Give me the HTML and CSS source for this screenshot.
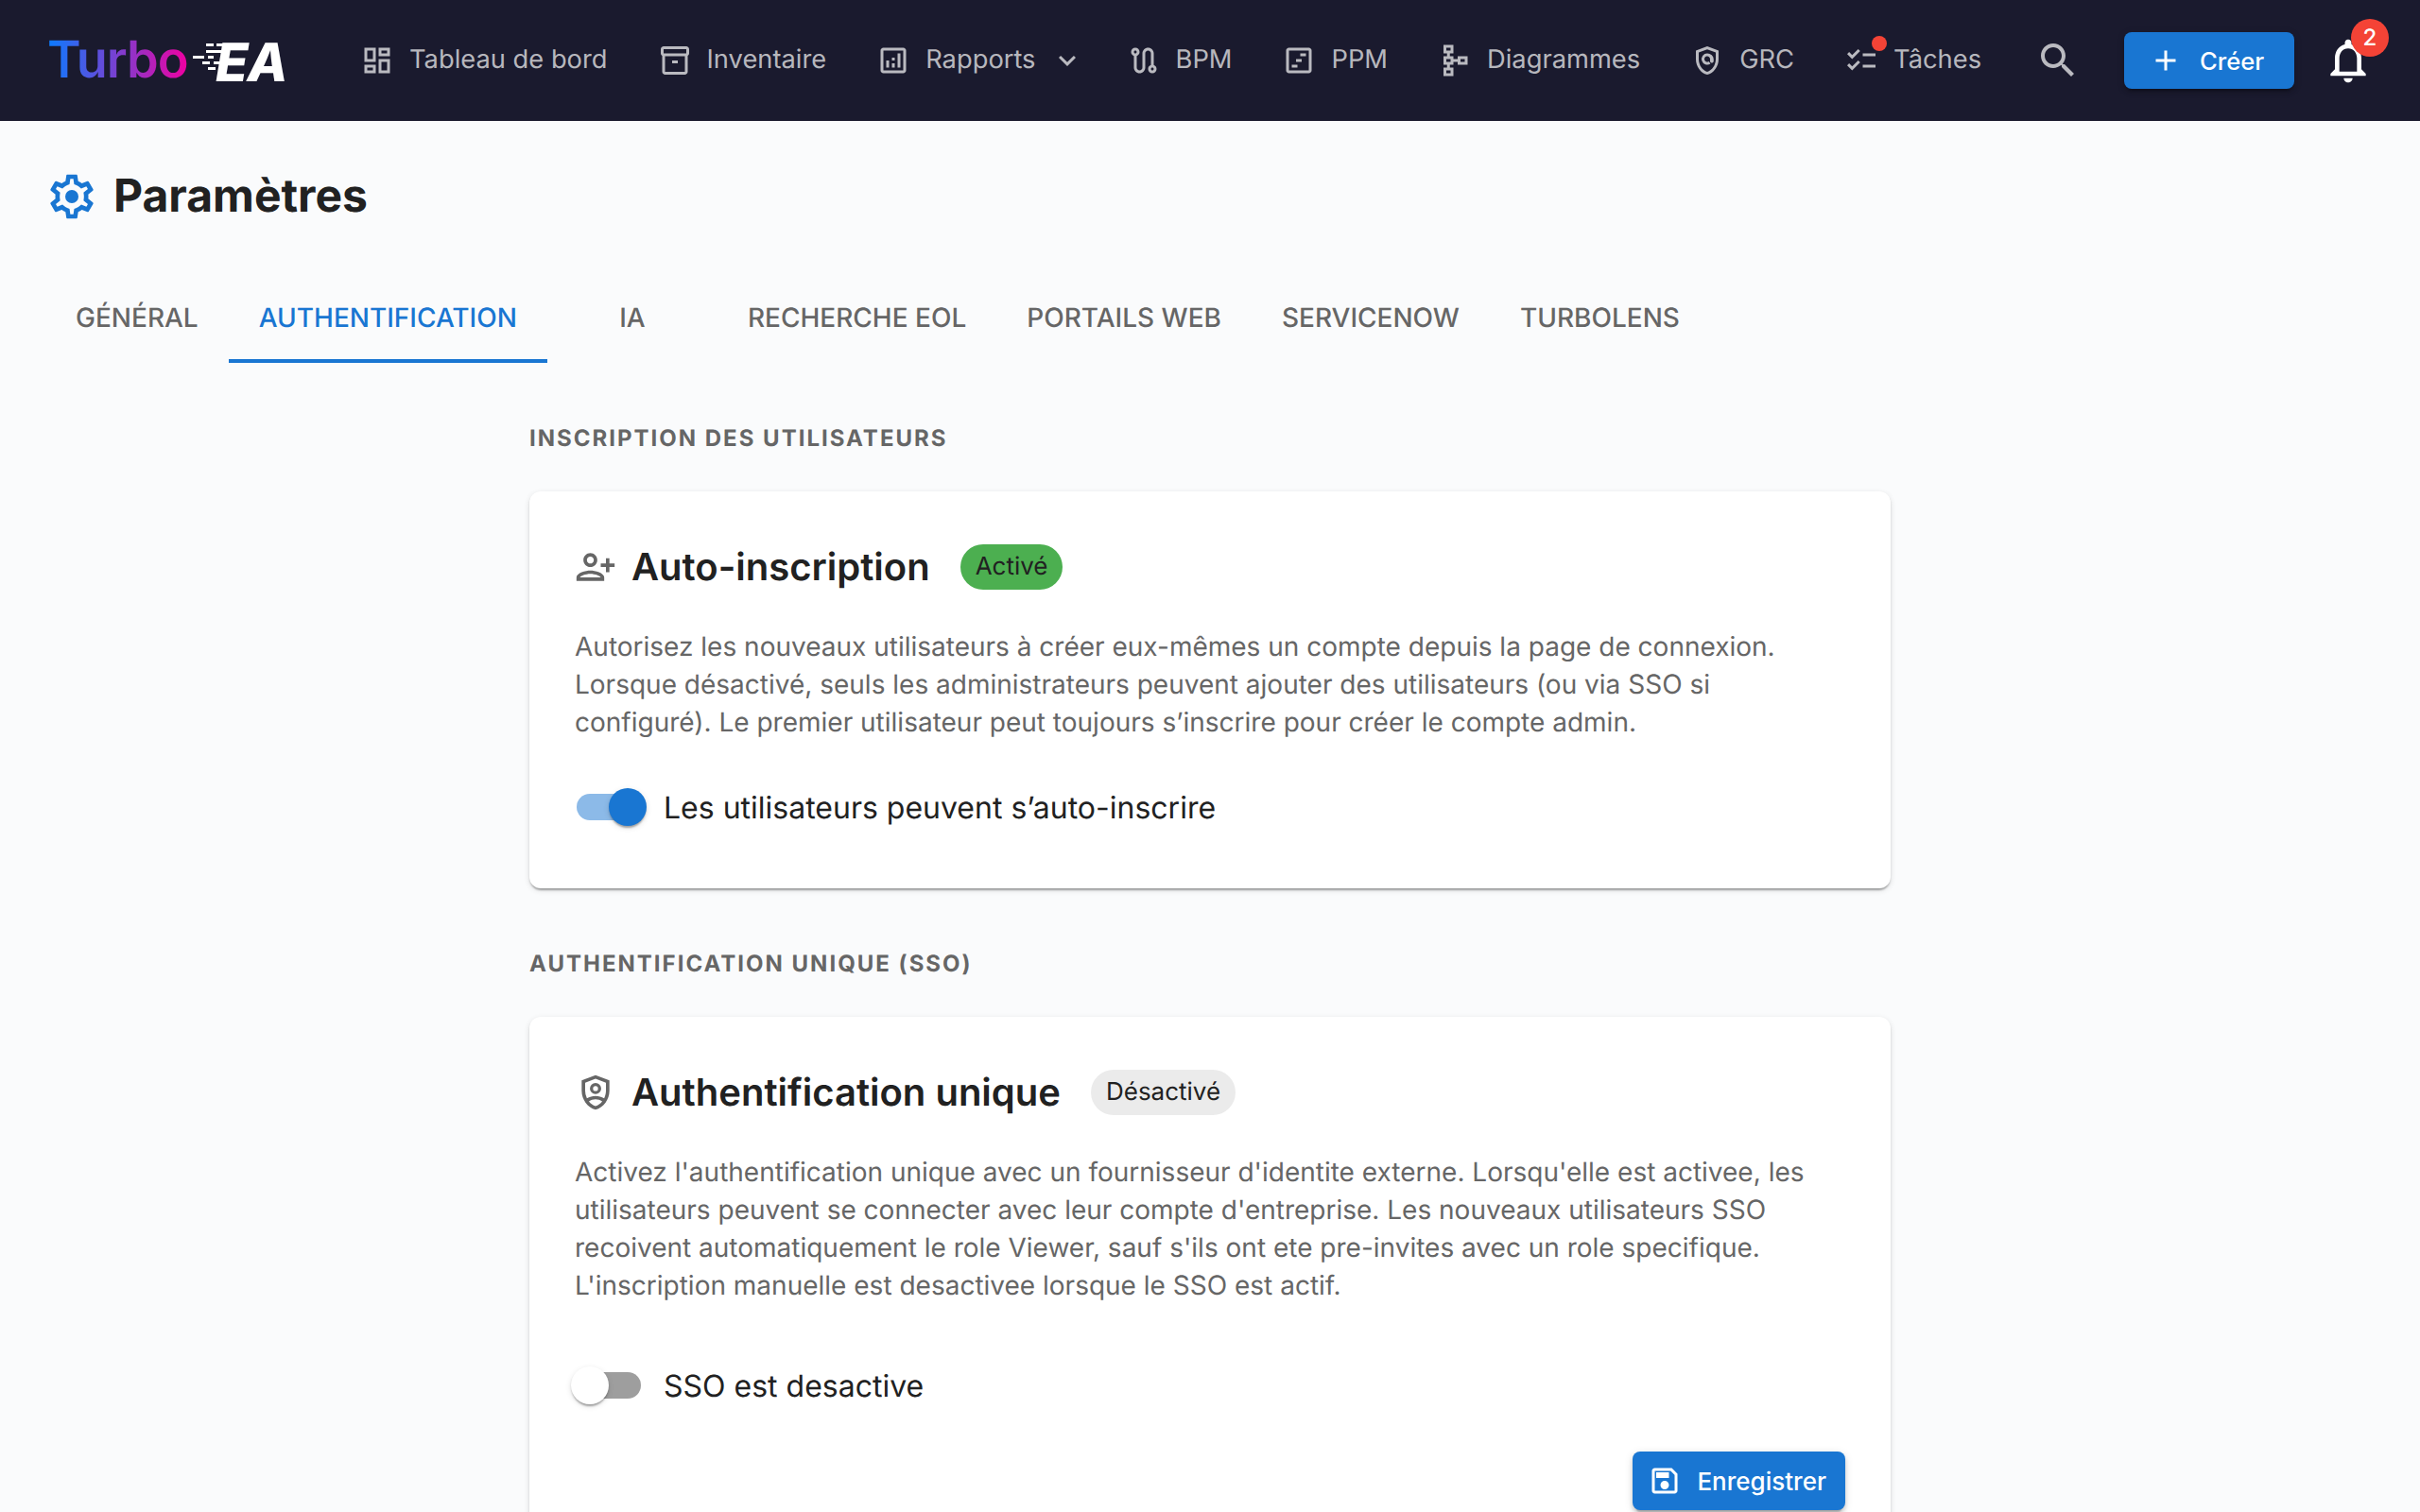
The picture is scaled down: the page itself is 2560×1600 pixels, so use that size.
FILE: index.html
```html
<!DOCTYPE html>
<html lang="fr">
<head>
  <meta charset="UTF-8" />
  <meta name="viewport" content="width=device-width, initial-scale=1.0"/>
  <title>Paramètres - Turbo EA</title>
  <link rel="stylesheet" href="styles.css">
</head>
<body>

  <header class="topbar">
    <a class="logo" href="#">
      <span class="logo-turbo">Turbo</span>
      <span class="logo-ea">EA</span>
      <svg class="logo-lines" viewBox="0 0 60 44">
        <rect x="14" y="2" width="8" height="3" fill="#fff"/>
        <rect x="25" y="2" width="14" height="3" fill="#fff"/>
        <rect x="14" y="9" width="20" height="3" fill="#fff"/>
        <rect x="0" y="15" width="12" height="3" fill="#fff"/>
        <rect x="16" y="15" width="6" height="3" fill="#fff"/>
        <rect x="10" y="21" width="8" height="3" fill="#fff"/>
        <rect x="22" y="21" width="14" height="3" fill="#fff"/>
        <rect x="16" y="27" width="8" height="3" fill="#fff"/>
      </svg>
    </a>

    <nav class="nav-links">
      <a class="nav-item" href="#">
        <svg class="nav-icon" viewBox="0 0 24 24"><path d="M19 5v2h-4V5zM9 5v6H5V5zm10 8v6h-4v-6zM9 17v2H5v-2zM21 3h-8v6h8zM11 3H3v10h8zm10 8h-8v10h8zm-10 4H3v6h8z"/></svg>
        Tableau de bord
      </a>
      <a class="nav-item" href="#">
        <svg class="nav-icon" viewBox="0 0 24 24"><path d="M20 2H4c-1 0-2 .9-2 2v3.01c0 .72.43 1.34 1 1.69V20c0 1.1 1.1 2 2 2h14c.9 0 2-.9 2-2V8.7c.57-.35 1-.97 1-1.69V4c0-1.1-1-2-2-2m-1 18H5V9h14zm1-13H4V4h16z"/><path d="M10 12h4v2h-4z"/></svg>
        Inventaire
      </a>
      <a class="nav-item nav-item-menu" href="#">
        <svg class="nav-icon" viewBox="0 0 24 24"><path d="M19 3H5c-1.1 0-2 .9-2 2v14c0 1.1.9 2 2 2h14c1.100 0 2-.9 2-2V5c0-1.100-.9-2-2-2m0 16H5V5h14z"/><path d="M7 12h2v5H7zm8-5h2v10h-2zm-4 7h2v3h-2zm0-4h2v2h-2z"/></svg>
        Rapports
        <svg class="nav-chevron" viewBox="0 0 24 24"><path d="M16.590 8.590 12 13.170 7.410 8.590 6 10l6 6 6-6z"/></svg>
      </a>
      <a class="nav-item" href="#">
        <svg class="nav-icon" viewBox="0 0 24 24"><path d="M19 15.180V7c0-2.210-1.790-4-4-4s-4 1.790-4 4v10c0 1.100-.9 2-2 2s-2-.9-2-2V8.820C8.160 8.400 9 7.300 9 6c0-1.660-1.340-3-3-3S3 4.340 3 6c0 1.300.84 2.400 2 2.820V17c0 2.210 1.790 4 4 4s4-1.790 4-4V7c0-1.100.9-2 2-2s2 .9 2 2v8.180c-1.160.41-2 1.510-2 2.820 0 1.660 1.340 3 3 3s3-1.340 3-3c0-1.300-.84-2.400-2-2.820M6 5c.55 0 1 .45 1 1s-.45 1-1 1-1-.45-1-1 .45-1 1-1m12 14c-.55 0-1-.45-1-1s.45-1 1-1 1 .45 1 1-.45 1-1 1"/></svg>
        BPM
      </a>
      <a class="nav-item" href="#">
        <svg class="nav-icon" viewBox="0 0 24 24"><path d="M19 3H5c-1.100 0-2 .9-2 2v14c0 1.100.9 2 2 2h14c1.100 0 2-.9 2-2V5c0-1.100-.9-2-2-2m0 16H5V5h14z"/><path d="M13 7h4v2h-4zM10 11h4v2h-4zM7 15h4v2H7z"/></svg>
        PPM
      </a>
      <a class="nav-item" href="#">
        <svg class="nav-icon" viewBox="0 0 24 24"><path d="M14 9v2h-3V9H8.500V7H11V1H4v6h2.500v2H4v6h2.500v2H4v6h7v-6H8.500v-2H11v-2h3v2h7V9zM6 3h3v2H6zm3 18H6v-2h3zm0-8H6v-2h3zm10 0h-3v-2h3z"/></svg>
        Diagrammes
      </a>
      <a class="nav-item" href="#">
        <svg class="nav-icon" viewBox="0 0 24 24"><path d="M12 2 4 5v6.100c0 5.050 3.410 9.760 8 10.900 4.590-1.140 8-5.850 8-10.900V5zm6 9.100c0 4-2.550 7.700-6 8.830-3.450-1.130-6-4.820-6-8.830V6.390l6-2.250 6 2.250z"/><path d="M12 7a4 4 0 1 0 2.300 7.270l-1.150-1.640A2 2 0 1 1 14 11v1.500c0 1.600 2.500 1.600 2.500 0V11A4.500 4 0 0 0 12 7"/></svg>
        GRC
      </a>
      <a class="nav-item" href="#">
        <span class="nav-icon-wrap">
          <svg class="nav-icon" viewBox="0 0 24 24"><path d="M22 7h-9v2h9zm0 8h-9v2h9zM5.540 11 2 7.460l1.410-1.410 2.120 2.120 4.240-4.240 1.410 1.410zm0 8L2 15.460l1.410-1.410 2.120 2.120 4.240-4.240 1.410 1.410z"/></svg>
          <span class="nav-dot"></span>
        </span>
        Tâches
      </a>
    </nav>

    <div class="topbar-right">
      <svg class="search-icon" viewBox="0 0 24 24"><path d="M15.500 14h-.79l-.28-.27C15.410 12.590 16 11.110 16 9.500 16 5.910 13.090 3 9.500 3S3 5.910 3 9.500 5.910 16 9.500 16c1.610 0 3.090-.59 4.230-1.570l.27.28v.79l5 4.990L20.490 19zm-6 0C7.010 14 5 11.990 5 9.500S7.010 5 9.500 5 14 7.010 14 9.500 11.990 14 9.500 14"/></svg>
      <button class="btn btn-create">
        <svg class="btn-icon" viewBox="0 0 24 24"><path d="M19 13h-6v6h-2v-6H5v-2h6V5h2v6h6z"/></svg>
        Créer
      </button>
      <div class="bell">
        <svg class="bell-icon" viewBox="0 0 24 24"><path d="M12 22c1.100 0 2-.9 2-2h-4c0 1.100.9 2 2 2m6-6v-5c0-3.070-1.630-5.640-4.500-6.320V4c0-.83-.67-1.500-1.500-1.500s-1.500.67-1.500 1.500v.68C7.640 5.360 6 7.920 6 11v5l-2 2v1h16v-1zm-2 1H8v-6c0-2.480 1.510-4.500 4-4.500s4 2.020 4 4.500z"/></svg>
        <span class="bell-badge">2</span>
      </div>
    </div>
  </header>

  <main class="page">
    <div class="page-title">
      <svg class="title-icon" viewBox="0 0 24 24"><path d="M19.430 12.980c.04-.32.07-.64.07-.98 0-.34-.03-.66-.07-.98l2.110-1.650c.19-.15.24-.42.12-.64l-2-3.460c-.09-.16-.26-.25-.44-.25-.06 0-.12.01-.17.03l-2.490 1c-.52-.4-1.080-.73-1.690-.98l-.38-2.650C14.460 2.180 14.250 2 14 2h-4c-.25 0-.46.18-.49.42l-.38 2.650c-.61.25-1.170.59-1.690.98l-2.490-1c-.06-.02-.12-.03-.18-.03-.17 0-.34.09-.43.25l-2 3.460c-.13.22-.07.49.12.64l2.110 1.650c-.04.32-.07.65-.07.98 0 .33.03.66.07.98l-2.110 1.650c-.19.15-.24.42-.12.64l2 3.460c.09.16.26.25.44.25.06 0 .12-.01.17-.03l2.490-1c.52.4 1.080.73 1.690.98l.38 2.650c.03.24.24.42.49.42h4c.25 0 .46-.18.49-.42l.38-2.650c.61-.25 1.170-.59 1.690-.98l2.490 1c.06.02.12.03.18.03.17 0 .34-.09.43-.25l2-3.460c.12-.22.07-.49-.12-.64zm-1.980-1.710c.04.31.05.52.05.73 0 .21-.02.43-.05.73l-.14 1.130.89.7 1.080.84-.7 1.210-1.270-.51-1.040-.42-.9.68c-.43.32-.84.56-1.250.73l-1.060.43-.16 1.130-.2 1.350h-1.400l-.19-1.350-.16-1.130-1.060-.43c-.43-.18-.83-.41-1.230-.71l-.91-.7-1.060.43-1.270.51-.7-1.210 1.080-.84.89-.7-.14-1.130c-.03-.31-.05-.54-.05-.74s.02-.43.05-.73l.14-1.130-.89-.7-1.080-.84.7-1.210 1.270.51 1.040.42.9-.68c.43-.32.84-.56 1.250-.73l1.060-.43.16-1.130.2-1.350h1.390l.19 1.350.16 1.130 1.060.43c.43.18.83.41 1.230.71l.91.7 1.060-.43 1.270-.51.7 1.210-1.070.85-.89.7z"/><circle cx="12" cy="12" r="3"/></svg>
      <h1>Paramètres</h1>
    </div>

    <div class="tabs">
      <a class="tab" href="#">Général</a>
      <a class="tab active" href="#">Authentification</a>
      <a class="tab" href="#">IA</a>
      <a class="tab" href="#">Recherche EOL</a>
      <a class="tab" href="#">Portails web</a>
      <a class="tab" href="#">ServiceNow</a>
      <a class="tab" href="#">TurboLens</a>
    </div>

    <div class="settings">
      <h2 class="section-label">Inscription des utilisateurs</h2>
      <section class="card">
        <div class="card-head">
          <svg class="card-icon" viewBox="0 0 24 24"><g transform="matrix(-1 0 0 1 24 0)"><path d="M15 12c2.210 0 4-1.790 4-4s-1.790-4-4-4-4 1.790-4 4 1.790 4 4 4m0-6c1.100 0 2 .9 2 2s-.9 2-2 2-2-.9-2-2 .9-2 2-2m0 8c-2.670 0-8 1.340-8 4v2h16v-2c0-2.660-5.330-4-8-4m-6 4c.22-.72 3.310-2 6-2 2.700 0 5.800 1.290 6 2zm-3-3v-3h3v-2H6V7H4v3H1v2h3v3z"/></g></svg>
          <h3>Auto-inscription</h3>
          <span class="chip chip-on">Activé</span>
        </div>
        <p class="card-text">Autorisez les nouveaux utilisateurs à créer eux-mêmes un compte depuis la page de connexion. Lorsque désactivé, seuls les administrateurs peuvent ajouter des utilisateurs (ou via SSO si configuré). Le premier utilisateur peut toujours s’inscrire pour créer le compte admin.</p>
        <div class="switch-row">
          <span class="switch on"><span class="switch-thumb"></span></span>
          <span class="switch-label">Les utilisateurs peuvent s’auto-inscrire</span>
        </div>
      </section>

      <h2 class="section-label">Authentification unique (SSO)</h2>
      <section class="card">
        <div class="card-head">
          <svg class="card-icon" viewBox="0 0 24 24"><path d="M12 2 4 5v6.100c0 5.050 3.410 9.760 8 10.900 4.590-1.140 8-5.850 8-10.900V5zm6 9.100c0 1.520-.37 3-1.030 4.320-1.440-.88-3.230-1.420-4.970-1.420s-3.530.54-4.970 1.420A9.700 9.700 0 0 1 6 11.100V6.390l6-2.250 6 2.250zM12 19.930c-1.500-.49-2.830-1.480-3.840-2.770C9.320 16.430 10.700 16 12 16s2.680.43 3.840 1.160c-1.010 1.290-2.340 2.280-3.840 2.770"/><path d="M12 6.500a3.250 3.250 0 1 0 0 6.500 3.250 3.250 0 0 0 0-6.500m0 4.700a1.450 1.450 0 1 1 0-2.900 1.450 1.450 0 0 1 0 2.900"/></svg>
          <h3>Authentification unique</h3>
          <span class="chip">Désactivé</span>
        </div>
        <p class="card-text">Activez l'authentification unique avec un fournisseur d'identite externe. Lorsqu'elle est activee, les utilisateurs peuvent se connecter avec leur compte d'entreprise. Les nouveaux utilisateurs SSO recoivent automatiquement le role Viewer, sauf s'ils ont ete pre-invites avec un role specifique. L'inscription manuelle est desactivee lorsque le SSO est actif.</p>
        <div class="switch-row switch-row-sso">
          <span class="switch"><span class="switch-thumb"></span></span>
          <span class="switch-label">SSO est desactive</span>
        </div>
        <div class="card-actions">
          <button class="btn btn-save">
            <svg class="btn-icon" viewBox="0 0 24 24"><path d="M17 3H5c-1.110 0-2 .9-2 2v14c0 1.100.89 2 2 2h14c1.100 0 2-.9 2-2V7zm2 16H5V5h11.170L19 7.830zm-7-7c-1.660 0-3 1.340-3 3s1.340 3 3 3 3-1.340 3-3-1.340-3-3-3M6 6h9v4H6z"/></svg>
            Enregistrer
          </button>
        </div>
      </section>
    </div>
  </main>

</body>
</html>
```

FILE: styles.css
```css
html, body {
  height: 100%;
}

body {
  font-family: Inter, "Noto Sans", sans-serif;
  text-rendering: geometricPrecision;
  background: #fafbfc;
  color: #212121;
  margin: 0;
  padding: 0;
  overflow: hidden;
}

a {
  color: inherit;
  text-decoration: none;
}

svg {
  fill: currentColor;
  flex: none;
  display: block;
}

/* top bar */

.topbar {
  display: flex;
  align-items: center;
  height: 128px;
  padding: 0 48px 0 50px;
  background: #1a1a2e;
  box-sizing: border-box;
}

.logo {
  position: relative;
  display: flex;
  align-items: center;
  width: 256px;
  height: 60px;
  margin-right: 75px;
  font-size: 54px;
  line-height: 1;
  font-weight: 600;
  letter-spacing: -1px;
}

.logo-turbo {
  background: linear-gradient(90deg, #0a7cff 0%, #7c3fd0 50%, #f000a0 100%);
  -webkit-background-clip: text;
  background-clip: text;
  color: transparent;
}

.logo-ea {
  position: absolute;
  left: 178px;
  top: 4px;
  color: #fff;
  font-weight: 800;
  font-style: italic;
  font-size: 56px;
}

.logo-lines {
  position: absolute;
  left: 154px;
  top: 10px;
  width: 60px;
  height: 44px;
}

.nav-links {
  display: flex;
  align-items: center;
  gap: 53px;
  margin-bottom: 3px;
}

.nav-item {
  display: flex;
  align-items: center;
  gap: 16px;
  font-size: 27.3px;
  font-weight: 400;
  color: rgba(255, 255, 255, 0.7);
  white-space: nowrap;
}

.nav-item-menu {
  margin-right: -8px;
}

.nav-icon {
  width: 36px;
  height: 36px;
  margin-top: 3px;
}

.nav-icon-wrap {
  position: relative;
  display: block;
}

.nav-dot {
  position: absolute;
  top: -5px;
  right: -9px;
  width: 16px;
  height: 16px;
  border-radius: 50%;
  background: #f44336;
}

.nav-chevron {
  width: 36px;
  height: 36px;
  margin-top: 3px;
  margin-left: -1px;
}

.topbar-right {
  display: flex;
  align-items: center;
  margin-left: auto;
}

.search-icon {
  width: 48px;
  height: 48px;
  color: rgba(255, 255, 255, 0.7);
  margin-right: 46px;
}

.btn {
  display: inline-flex;
  align-items: center;
  font-family: inherit;
  font-size: 26px;
  font-weight: 500;
  color: #fff;
  background: #1976d2;
  border: none;
  border-radius: 8px;
  cursor: pointer;
  box-shadow: 0 6px 2px -4px rgba(0,0,0,0.2), 0 4px 4px rgba(0,0,0,0.14), 0 2px 10px rgba(0,0,0,0.12);
}

.btn-create {
  width: 180px;
  height: 60px;
  padding: 0 0 0 26px;
  gap: 18px;
  margin-right: 29px;
  font-size: 25.6px;
}

.btn-icon {
  width: 36px;
  height: 36px;
}

.bell {
  position: relative;
  color: #fff;
}

.bell-icon {
  width: 56px;
  height: 56px;
}

.bell-badge {
  position: absolute;
  top: -16px;
  right: -15px;
  width: 40px;
  height: 40px;
  border-radius: 50%;
  background: #f44336;
  color: #fff;
  font-size: 24px;
  font-weight: 500;
  text-align: center;
  line-height: 40px;
}

/* page */

.page {
  padding: 48px;
}

.page-title {
  display: flex;
  align-items: center;
  gap: 16px;
  height: 64px;
  margin-bottom: 48px;
}

.title-icon {
  width: 56px;
  height: 56px;
  color: #1976d2;
}

.page-title h1 {
  margin: 0;
  padding-bottom: 3px;
  font-size: 48px;
  font-weight: 700;
}

.tabs {
  display: flex;
  height: 96px;
}

.tab {
  min-width: 180px;
  padding: 0 32px;
  box-sizing: border-box;
  font-size: 28px;
  font-weight: 500;
  line-height: 96px;
  text-align: center;
  text-transform: uppercase;
  color: #666;
}

.tab.active {
  color: #1976d2;
  border-bottom: 4px solid #1976d2;
}

.settings {
  max-width: 1440px;
  margin: 64px auto 0;
}

.section-label {
  margin: 0 0 40px;
  font-size: 24px;
  line-height: 32px;
  font-weight: 700;
  letter-spacing: 2px;
  text-transform: uppercase;
  color: #666;
}

.card {
  margin-bottom: 64px;
  padding: 48px;
  background: #fff;
  border-radius: 12px;
  box-shadow: 0 4px 2px -2px rgba(0,0,0,0.2), 0 2px 2px rgba(0,0,0,0.14), 0 2px 6px rgba(0,0,0,0.12);
}

.card-head {
  display: flex;
  align-items: center;
  height: 64px;
  margin-bottom: 32px;
}

.card-icon {
  width: 44px;
  height: 44px;
  margin-right: 16px;
  color: #666;
}

.card-head h3 {
  margin: 0 32px 0 0;
  padding-bottom: 2px;
  font-size: 40px;
  font-weight: 600;
}

.chip {
  height: 48px;
  padding: 0 16px;
  border-radius: 24px;
  background: #ebebeb;
  font-size: 26px;
  line-height: 48px;
}

.chip-on {
  background: #4caf50;
}

.card-text {
  margin: 0;
  font-size: 28px;
  line-height: 40px;
  color: #666;
}

.switch-row {
  display: flex;
  align-items: center;
  height: 76px;
  margin-top: 32px;
  padding-left: 2px;
}

.switch-row-sso {
  margin-top: 48px;
}

.switch {
  display: flex;
  align-items: center;
  width: 68px;
  height: 28px;
  margin-right: 24px;
  border-radius: 14px;
  background: #9e9e9e;
}

.switch.on {
  justify-content: flex-end;
  background: #8cbae8;
}

.switch-thumb {
  width: 40px;
  height: 40px;
  margin-left: -6px;
  border-radius: 50%;
  background: #fff;
  box-shadow: 0 4px 2px -2px rgba(0,0,0,0.2), 0 2px 2px rgba(0,0,0,0.14), 0 2px 6px rgba(0,0,0,0.12);
}

.switch.on .switch-thumb {
  margin-left: 0;
  margin-right: -6px;
  background: #1976d2;
}

.switch-label {
  font-size: 32px;
}

.card-actions {
  display: flex;
  justify-content: flex-end;
  margin-top: 32px;
}

.btn-save {
  height: 62px;
  padding: 0 20px 0 16px;
  gap: 16px;
}
```
